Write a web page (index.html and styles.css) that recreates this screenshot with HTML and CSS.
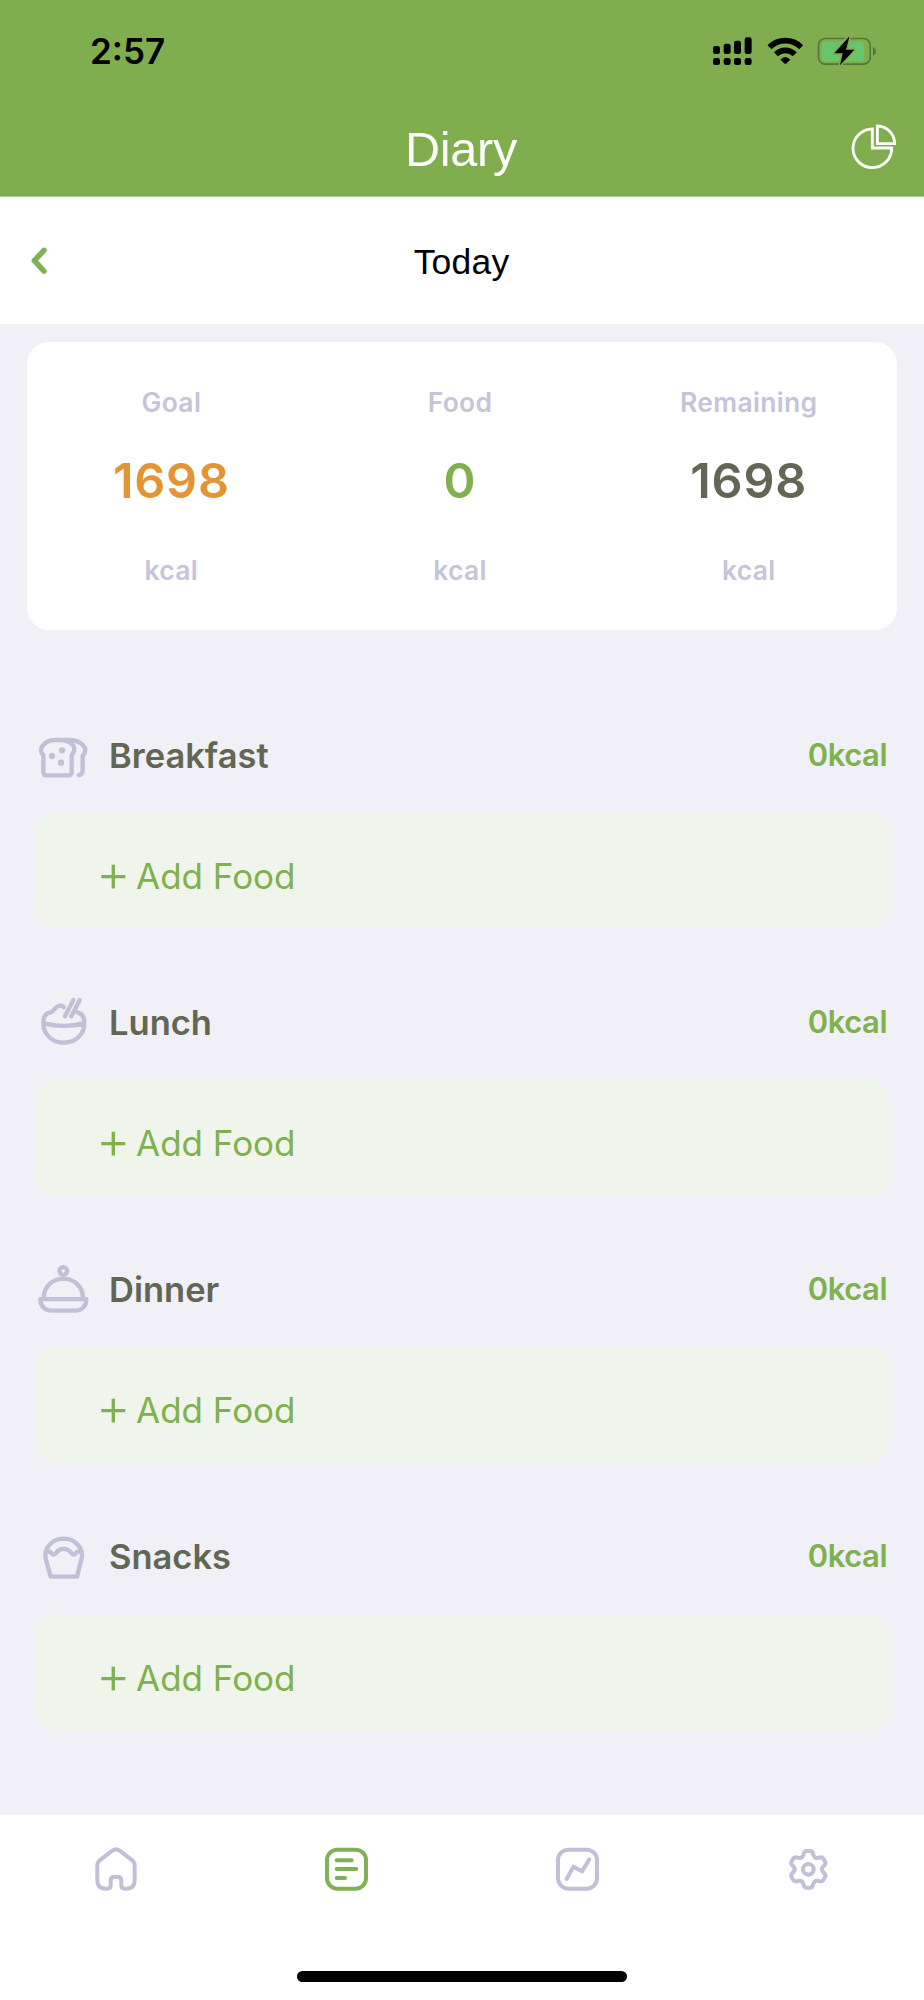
FILE: index.html
```html
<!DOCTYPE html>
<html lang="en">
<head>
<meta charset="utf-8">
<title>Diary</title>
<link rel="stylesheet" href="styles.css">
</head>
<body>
<div class="app">
  <header class="header">
    <div class="status">
      <span class="time">2:57</span>
      <svg class="status-icons" viewBox="90 90 510 120">
        <g>
          <rect x="99" y="135" width="21" height="24" rx="7"/><rect x="131" y="128" width="21" height="31" rx="7"/>
          <rect x="162" y="119" width="21" height="40" rx="7"/><rect x="194" y="109" width="21" height="50" rx="7"/>
          <rect x="99" y="171" width="21" height="21" rx="7"/><rect x="131" y="171" width="21" height="21" rx="7"/>
          <rect x="162" y="171" width="21" height="21" rx="7"/><rect x="194" y="171" width="21" height="21" rx="7"/>
        </g>
        <path class="wifi" d="M268.6 138.6A67 67 0 0 1 363.4 138.6M287.7 159.7A40 40 0 0 1 344.3 159.7"/>
        <path d="M316 190L301 176Q316 160 331 176Z"/>
        <rect class="cell" x="415.500" y="112.500" width="155" height="77" rx="20"/>
        <path class="nub" d="M579 138Q588 142 588 151Q588 160 579 164Z"/>
        <rect class="charge" x="425" y="122" width="127" height="59" rx="11"/>
        <path class="bolt" d="M507 107L463 157H488L480 193L523 146H498L508 108Z"/>
      </svg>
    </div>
    <div class="titlebar">
      <h1 class="title">Diary</h1>
      <svg class="pie" viewBox="510 370 150 144">
        <path d="M580 388A58 58 0 1 0 638 445H580ZM595 379V432H647A53 53 0 0 0 595 379Z"/>
      </svg>
    </div>
  </header>

  <nav class="datebar">
    <svg class="chevron" viewBox="0 0 18 30"><path d="M14 4.300L4.300 14.700L14 25.100"/></svg>
    <span class="date">Today</span>
  </nav>

  <main class="content">
    <section class="summary">
      <div class="stat"><span class="label">Goal</span><span class="value goal">1698</span><span class="label">kcal</span></div>
      <div class="stat"><span class="label">Food</span><span class="value food">0</span><span class="label">kcal</span></div>
      <div class="stat"><span class="label">Remaining</span><span class="value">1698</span><span class="label">kcal</span></div>
    </section>

    <section class="meal">
      <div class="meal-head">
        <svg class="meal-icon" viewBox="51 60 156 168">
          <path d="M70 135C62 128 62 118 66 110C74 96 88 90 106 90H122C145 90 162 102 163 117C163 125 160 130 155 136V186Q155 196 145 196H80Q70 196 70 186ZM122 90H150C175 90 195 106 196 120C196 128 193 132 188 138V180Q188 194 176 196"/>
          <g class="dot"><circle cx="96" cy="138" r="9.500"/><circle cx="126" cy="121" r="9.500"/><circle cx="123" cy="158" r="9.500"/></g>
        </svg>
        <h2 class="meal-name">Breakfast</h2><span class="meal-kcal">0kcal</span>
      </div>
      <div class="add"><span class="plus">+</span><span>Add Food</span></div>
    </section>

    <section class="meal">
      <div class="meal-head">
        <svg class="meal-icon" viewBox="51 52 156 168">
          <path d="M172 98C187 101 193 115 193 130C193 165 166 189 131 189C97 189 70 165 70 130C70 114 76 101 90 99C102 97 104 78 122 78Q130 78 131 83M72 131Q131 146 192 131"/>
          <path class="stick" d="M160 61L135 110M179 61L154 110"/>
        </svg>
        <h2 class="meal-name">Lunch</h2><span class="meal-kcal">0kcal</span>
      </div>
      <div class="add"><span class="plus">+</span><span>Add Food</span></div>
    </section>

    <section class="meal">
      <div class="meal-head">
        <svg class="meal-icon" viewBox="51 74 156 168">
          <circle cx="130" cy="92" r="11.500"/>
          <path d="M71 173C71 140 97 115 130 115C163 115 189 140 189 173M61 176.500H199C199 196 186 211 166 211H94C74 211 61 196 61 176.500Z"/>
        </svg>
        <h2 class="meal-name">Dinner</h2><span class="meal-kcal">0kcal</span>
      </div>
      <div class="add"><span class="plus">+</span><span>Add Food</span></div>
    </section>

    <section class="meal">
      <div class="meal-head">
        <svg class="meal-icon" viewBox="51 66 156 168">
          <path d="M92 200L77 146C71 115 96 86 131 86C166 86 191 115 185 146L171 200ZM79 125C88 121 92 126 96 131Q101 136 107 130C119 112 143 112 155 130Q161 136 166 131C170 126 174 121 183 125"/>
        </svg>
        <h2 class="meal-name">Snacks</h2><span class="meal-kcal">0kcal</span>
      </div>
      <div class="add"><span class="plus">+</span><span>Add Food</span></div>
    </section>
  </main>

  <footer class="tabbar">
    <div class="tabs">
      <div class="tab"><svg class="tab-icon" viewBox="96 135 144 144">
        <path d="M112 240V196Q112 187 119 181L157 152Q168 144 179 152L217 181Q224 187 224 196V240Q224 266 200 266H194Q184 266 184 256V242Q184 231 174 231H162Q152 231 152 242V256Q152 266 142 266H136Q112 266 112 240Z"/>
      </svg></div>
      <div class="tab active"><svg class="tab-icon" viewBox="789 135 144 144">
        <rect x="801" y="149" width="117" height="117" rx="31"/><path d="M830 181H875M830 207H889M830 234H855"/>
      </svg></div>
      <div class="tab"><svg class="tab-icon" viewBox="102 135 144 144">
        <rect x="114" y="149" width="117" height="117" rx="31"/><path d="M140 237L160 200L186 214L208 178"/>
      </svg></div>
      <div class="tab"><svg class="tab-icon" viewBox="-70 -73 144 144">
        <defs><path id="tooth" d="M-20.500 -35.500C-14.500 -39 -15 -43 -14 -47Q-12 -55 -5 -55H5Q12 -55 14 -47C15 -43 14.500 -39 20.500 -35.500"/></defs>
        <use href="#tooth"/><use href="#tooth" transform="rotate(60)"/><use href="#tooth" transform="rotate(120)"/>
        <use href="#tooth" transform="rotate(180)"/><use href="#tooth" transform="rotate(240)"/><use href="#tooth" transform="rotate(300)"/>
        <circle r="16"/>
      </svg></div>
    </div>
    <div class="home-indicator"></div>
  </footer>
</div>
</body>
</html>
```
FILE: styles.css
```css
* { box-sizing: border-box; }
body { margin: 0; background: #f1f0f6; }
.app {
  width: 924px; height: 2000px;
  display: flex; flex-direction: column;
  font-family: Inter, "Liberation Sans", sans-serif;
  overflow: hidden;
}
h1, h2 { margin: 0; }
svg { display: block; flex: none; overflow: visible; }

.header { height: 197px; background: #80ad4e; border-bottom: 1px solid #b2d08d; }
.status { height: 102px; padding: 0 44px 0 90px; display: flex; justify-content: space-between; align-items: center; }
.time { font-size: 35px; font-weight: 600; line-height: 40px; color: #000; }
.status-icons { width: 170px; height: 40px; }
.wifi { fill: none; stroke: #000; stroke-width: 17; }
.cell { fill: none; stroke: #55763a; stroke-width: 5; }
.nub { fill: #55763a; }
.charge { fill: #67c56b; }
.bolt { stroke: #80ad4e; stroke-width: 10; paint-order: stroke; stroke-linejoin: round; }
.titlebar { height: 94px; padding: 0 25px 0 73px; display: flex; align-items: center; }
.title { flex: 1; text-align: center; font: 400 48.500px/56px "Liberation Sans", Arial, sans-serif; letter-spacing: -0.2px; color: #fff; }
.pie { width: 50px; height: 48px; margin-bottom: 4px; }
.pie path { fill: none; stroke: #fff; stroke-width: 8.500; }

.datebar { height: 127px; padding: 0 49px 0 30px; background: #fff; display: flex; align-items: center; }
.chevron { width: 18px; height: 30px; }
.chevron path { fill: none; stroke: #7fb157; stroke-width: 5.500; stroke-linecap: round; stroke-linejoin: round; }
.date { flex: 1; text-align: center; padding-top: 2px; font: 400 35.500px/40px "Liberation Sans", Arial, sans-serif; letter-spacing: 0.2px; color: #000; }

.content { flex: 1; padding: 18px 27px 0; }
.summary {
  height: 288px; padding: 0 4px 0 0; border-radius: 22px; background: #fff;
  display: grid; grid-template-columns: repeat(3, 1fr);
}
.stat { display: flex; flex-direction: column; align-items: center; padding-top: 42px; }
.label { font-size: 26.500px; line-height: 36px; font-weight: 600; letter-spacing: 0.3px; color: #c5c4d8; }
.value { font-size: 48.500px; line-height: 60px; margin: 31px 0 41px; font-weight: 600; letter-spacing: 0.8px; color: #626654; }
.goal { color: #e59433; }
.food { color: #80b14f; }

.meal { height: 267.300px; padding: 0 9px; }
.summary + .meal { margin-top: 100px; }
.meal-head { height: 56px; display: flex; align-items: center; padding: 0 1px; }
.meal-icon { width: 52px; height: 56px; }
.meal-icon path, .meal-icon circle { fill: none; stroke: #c0c1d6; stroke-width: 13; stroke-linecap: round; stroke-linejoin: round; }
.meal-icon .stick { stroke-width: 13; }
.meal-icon .dot circle { fill: #c0c1d6; stroke: none; }
.meal-name { flex: 1; margin-left: 20px; padding-bottom: 5px; font-size: 34.500px; line-height: 40px; font-weight: 600; color: #626654; }
.meal-kcal { padding-bottom: 7px; font-size: 31px; line-height: 38px; font-weight: 600; letter-spacing: -0.5px; color: #80b14f; }
.add {
  height: 116px; margin-top: 26.300px; padding: 11px 0 0 60px; border-radius: 20px;
  background: #f0f5eb; color: #80b14f; font-size: 35px; line-height: 40px;
  display: flex; align-items: center;
}
.plus { width: 40px; padding-bottom: 6px; font-size: 53px; font-weight: 300; }

.tabbar { height: 185px; background: #fff; }
.tabs { display: grid; grid-template-columns: repeat(4, 1fr); padding-top: 30px; }
.tab { display: flex; justify-content: center; color: #c0c1d6; }
.tab.active { color: #80b157; }
.tab-icon { width: 48px; height: 48px; fill: none; stroke: currentColor; stroke-width: 12; stroke-linecap: round; stroke-linejoin: round; }
.home-indicator { width: 330px; height: 11px; margin: 78px auto 0; border-radius: 6px; background: #000; }
```
